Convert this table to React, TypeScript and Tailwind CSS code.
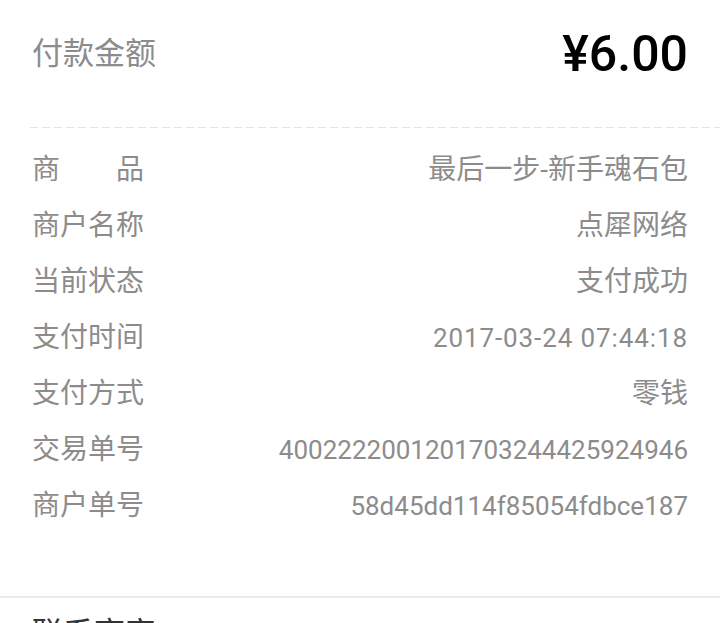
import React from "react";

const rows: [string, string, string][] = [
  ["商户名称", "点犀网络", ""],
  ["当前状态", "支付成功", ""],
  ["支付时间", "2017-03-24 07:44:18", "text-[26px] tracking-[0.9px]"],
  ["支付方式", "零钱", ""],
  ["交易单号", "4002222001201703244425924946", "text-[26px]"],
  ["商户单号", "58d45dd114f85054fdbce187", "text-[26px]"],
];

const font = "font-['Roboto','Noto_Sans_CJK_SC',sans-serif]";

export default function App() {
  return (
    <div className={`w-[720px] h-[623px] overflow-hidden bg-white ${font}`}>
      <div className="flex h-[108px] items-center justify-between pl-8 pr-8">
        <span className="text-[31px] text-[#8c8c8c]">付款金额</span>
        <span className="text-[50px] font-medium text-black">¥6.00</span>
      </div>
      <div className="mt-[19px] ml-[30px] h-px bg-[repeating-linear-gradient(90deg,#e3e3e3_0_8px,transparent_8px_12px)]" />
      <div className="pt-[14px] px-8 text-[28px] text-[#8c8c8c]">
        <div className="flex h-[56px] items-center justify-between">
          <span className="flex w-[112px] justify-between">
            <span>商</span>
            <span>品</span>
          </span>
          <span>最后一步-新手魂石包</span>
        </div>
        {rows.map(([k, v, cls]) => (
          <div key={k} className="flex h-[56px] items-center justify-between">
            <span>{k}</span>
            <span className={cls}>{v}</span>
          </div>
        ))}
      </div>
      <div className="mt-[62px] h-[2px] bg-[#ececec]" />
      <div className="px-8 pt-[16px] text-[31px] leading-[40px] text-[#333]">联系商家</div>
    </div>
  );
}
